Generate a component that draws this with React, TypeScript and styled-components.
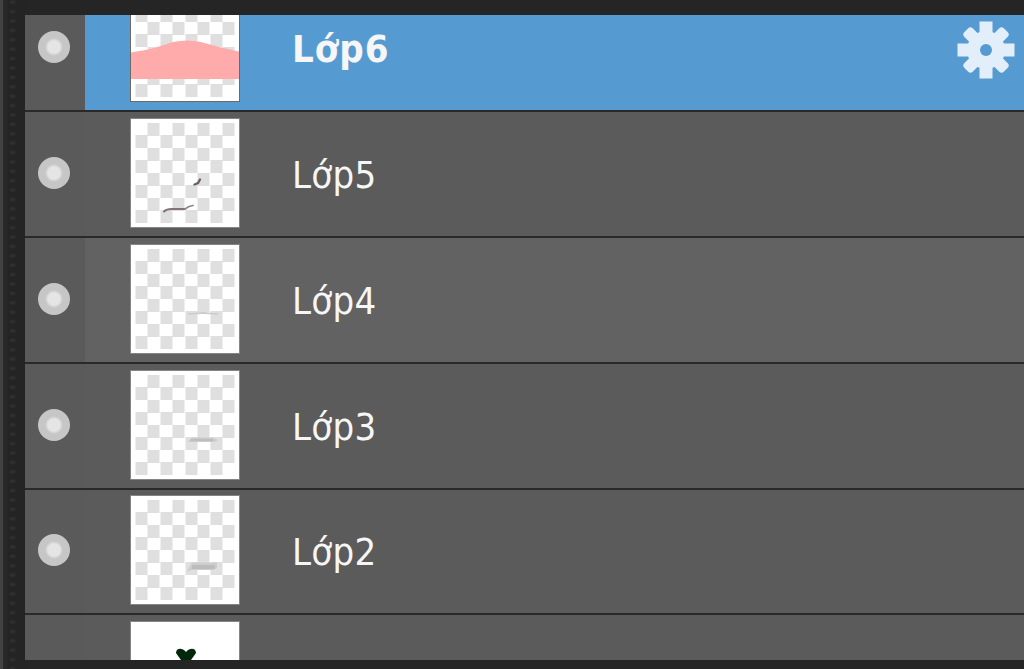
import styled, { createGlobalStyle, css } from 'styled-components';

type Cover = 'pink' | 'strokes' | 'hairline' | 'line' | 'bar';

type Layer = {
  name: string;
  cover: Cover;
  selected?: boolean;
  hovered?: boolean;
};

const layers: Layer[] = [
  { name: 'Lớp6', cover: 'pink', selected: true },
  { name: 'Lớp5', cover: 'strokes' },
  { name: 'Lớp4', cover: 'hairline', hovered: true },
  { name: 'Lớp3', cover: 'line' },
  { name: 'Lớp2', cover: 'bar' },
];

const Drawing = ({ cover }: { cover: Cover }) => {
  switch (cover) {
    case 'pink':
      return (
        <path
          d="M0 59.5C20 56.5 30 53 42 49Q56 46 70 49C84 53 94 55.5 108 58.5V86H0Z"
          fill="#ffabab"
        />
      );
    case 'strokes':
      return (
        <g fill="none" strokeLinecap="round">
          <path d="M33 92.5Q36 89.5 42 90H54" stroke="#857278" strokeWidth="2" />
          <path d="M54 90L58 87.5L62 86.5" stroke="#94858a" strokeWidth="1.8" />
          <path d="M63.5 65.5L67 64L69 60.5" stroke="#6d5e64" strokeWidth="2.4" />
        </g>
      );
    case 'hairline':
      return <path d="M57 69Q72 66 87 69Q72 68 57 69Z" fill="#bbb" stroke="#cbcbcb" />;
    case 'line':
      return (
        <>
          <path d="M57 71Q59 66.5 63 66.5H81L87 69L83 71Z" fill="#cbcbcb" />
          <path d="M60 69H82" stroke="#bababa" strokeWidth="1.5" />
        </>
      );
    case 'bar':
      return (
        <>
          <path d="M56 75L61 66.5H86V72L82 74H62Z" fill="#cdcdcd" />
          <path d="M61 71H84" stroke="#bcbcbc" strokeWidth="4" />
        </>
      );
  }
};

const Gear = () => (
  <svg width="58" height="58" viewBox="-29 -29 58 58">
    <g fill="#e2eef9" mask="url(#gear-hole)">
      <path d="M-6.5-28.5H6.5V28.5H-6.5ZM-28.5-6.5H28.5V6.5H-28.5Z" />
      <rect x="-6" y="-28" width="12" height="56" rx="3.5" transform="rotate(45)" />
      <rect x="-6" y="-28" width="12" height="56" rx="3.5" transform="rotate(-45)" />
      <circle r="19" />
    </g>
    <mask id="gear-hole" maskUnits="userSpaceOnUse" x="-29" y="-29" width="58" height="58">
      <rect x="-29" y="-29" width="58" height="58" fill="#fff" />
      <circle r="6" fill="#000" />
    </mask>
  </svg>
);

export default function App() {
  return (
    <>
      <GlobalStyle />
      <Window>
        <Grip />
        <Panel>
          <List>
            {layers.map(({ name, cover, selected, hovered }) => (
              <Row key={name} $first={selected}>
                <Visibility>
                  <Eye />
                </Visibility>
                <Body $selected={selected} $hovered={hovered}>
                  <Thumb $selected={selected}>
                    <Checker />
                    <Art viewBox="0 0 108 108">
                      <Drawing cover={cover} />
                    </Art>
                  </Thumb>
                  <Name $selected={selected}>{name}</Name>
                  {selected ? (
                    <Settings aria-label="Settings">
                      <Gear />
                    </Settings>
                  ) : null}
                </Body>
              </Row>
            ))}
            <Row>
              <Visibility />
              <Body>
                <Thumb>
                  <Art viewBox="0 0 108 108">
                    <path
                      d="M45 31C45 26 51 25 55 30C59 25 65 26 65 31L60 38H50Z"
                      fill="#03270b"
                    />
                  </Art>
                </Thumb>
              </Body>
            </Row>
          </List>
        </Panel>
      </Window>
    </>
  );
}

const GlobalStyle = createGlobalStyle`
  body {
    margin: 0;
    background: #252525;
  }
`;

const Window = styled.div`
  display: flex;
  box-sizing: border-box;
  width: 1024px;
  height: 669px;
  overflow: hidden;
  background: #252525;
`;

const Grip = styled.div`
  box-sizing: border-box;
  flex: none;
  width: 25px;
  border-left: 3px solid #434343;
  background:
    radial-gradient(ellipse 4px 2.5px, #303030 40%, transparent) 5px -2.4px / 9px 9.4px repeat-y,
    linear-gradient(90deg, #2b2b2b, #242424 6px);
`;

const Panel = styled.main`
  flex: 1;
  padding: 15px 0 9px;
`;

const List = styled.div`
  display: flex;
  flex-direction: column;
  height: 645px;
  overflow: hidden;
`;

const Row = styled.div<{ $first?: boolean }>`
  display: flex;
  flex: none;
  box-sizing: border-box;
  height: 125.75px;
  margin-top: ${({ $first }) => ($first ? '-28.5px' : '0')};
  border-bottom: 2px solid #292929;
`;

const Visibility = styled.div`
  display: flex;
  align-items: center;
  justify-content: center;
  box-sizing: border-box;
  width: 60px;
  padding: 0 3px 2px 0;
  background: #5a5a5a;
`;

const Eye = styled.div`
  width: 32px;
  height: 32px;
  border-radius: 50%;
  background: radial-gradient(circle, #e5e5e5 6px, #c6c6c6 9px);
`;

const Body = styled.div<{ $selected?: boolean; $hovered?: boolean }>`
  display: flex;
  flex: 1;
  align-items: center;
  box-sizing: border-box;
  padding: 0 9px 2px 46px;
  background: #5b5b5b;

  ${({ $hovered }) =>
    $hovered &&
    css`
      background: #626262;
    `}

  ${({ $selected }) =>
    $selected &&
    css`
      background: #559bd1;
    `}
`;

const Thumb = styled.div<{ $selected?: boolean }>`
  display: grid;
  flex: none;
  box-sizing: border-box;
  width: 108px;
  height: 108px;
  background: #fff;
  box-shadow: 0 0 0 1px ${({ $selected }) => ($selected ? '#6d6a66' : '#858585')};

  > * {
    grid-area: 1 / 1;
  }
`;

const Checker = styled.div`
  margin: 4px;
  background: conic-gradient(#fff 25%, #dfdfdf 0 50%, #fff 0 75%, #dfdfdf 0) 12.5px 0 / 25px 25px;
`;

const Art = styled.svg`
  width: 108px;
  height: 108px;
`;

const Name = styled.span<{ $selected?: boolean }>`
  flex: 1;
  margin-left: 53px;
  padding-top: 4px;
  color: #f6f6f6;
  font-family: 'DejaVu Sans Condensed', 'DejaVu Sans', sans-serif;
  font-size: 38px;
  font-stretch: condensed;
  font-weight: ${({ $selected }) => ($selected ? 700 : 400)};
  letter-spacing: ${({ $selected }) => ($selected ? '1px' : '0.3px')};
  line-height: 46px;
`;

const Settings = styled.button`
  display: flex;
  padding: 6px 0 0;
  border: 0;
  background: none;
`;
